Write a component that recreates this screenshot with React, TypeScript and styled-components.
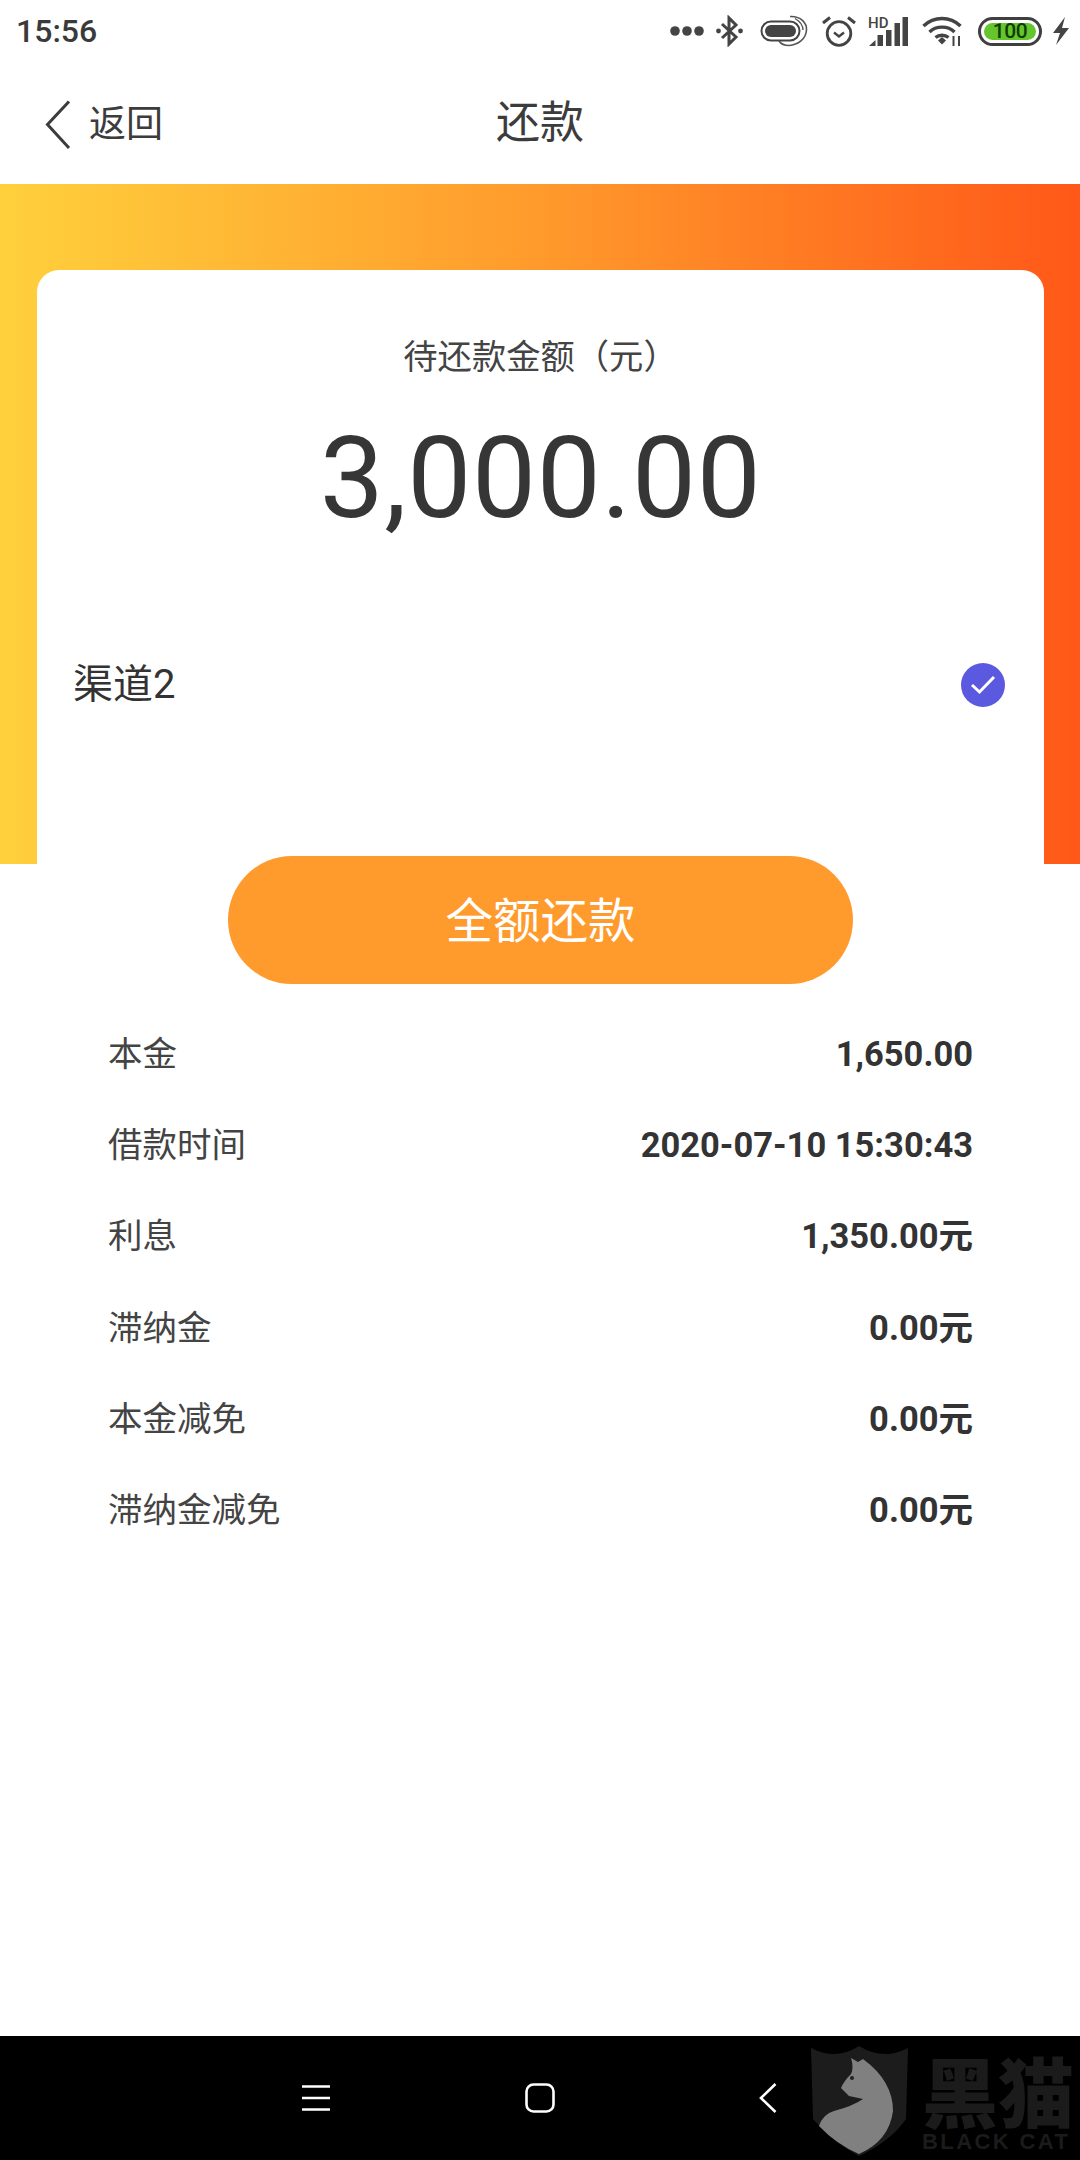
import React from "react";
import styled, { createGlobalStyle } from "styled-components";

const Global = createGlobalStyle`
  html, body { margin: 0; padding: 0; background: #fff; }
  #root { width: 1080px; height: 2160px; }
  * { box-sizing: border-box; }
`;

const FONT = `Roboto, "Noto Sans CJK SC", sans-serif`;

const Page = styled.div`
  position: relative;
  width: 1080px;
  height: 2160px;
  display: flex;
  flex-direction: column;
  overflow: hidden;
  background: #fff;
  color: #333;
  font-family: ${FONT};
`;

const StatusBar = styled.header`
  height: 60px;
  display: flex;
  align-items: center;
  justify-content: space-between;
  padding: 2px 10px 0 16px;
`;

const Clock = styled.span`
  font-size: 32px;
  font-weight: 500;
  color: #3a3a3a;
`;

const StatusIcons = styled.div`
  display: flex;
  align-items: center;
`;

const StatusIcon = styled.svg<{ $gap?: number }>`
  display: block;
  flex: none;
  margin-left: ${(p) => p.$gap ?? 0}px;
`;

const Battery = styled.div`
  width: 64px;
  height: 29px;
  margin-left: 14px;
  padding: 3px;
  border: 3px solid #3f3f3f;
  border-radius: 15px;
  display: flex;
`;

const BatteryFill = styled.div`
  flex: 1;
  border-radius: 10px;
  background: #64c52d;
  color: #123c06;
  font-size: 21px;
  line-height: 17px;
  font-weight: 500;
  text-align: center;
  letter-spacing: -0.5px;
`;

const NavBar = styled.nav`
  height: 124px;
  display: grid;
  grid-template-columns: 1fr auto 1fr;
  align-items: center;
  padding: 6px 45px 0;
`;

const BackLink = styled.div`
  display: flex;
  align-items: center;
  gap: 18px;
  font-size: 37px;
  line-height: 50px;
  color: #3c3c3c;
`;

const NavTitle = styled.h1`
  margin: 0 0 12px;
  font-size: 44px;
  font-weight: 400;
  color: #3c3c3c;
`;

const Hero = styled.section`
  height: 680px;
  padding: 86px 36px 0 37px;
  background: linear-gradient(90deg, #ffd03c 0%, #ff9a2c 50%, #ff5818 100%);
`;

const Card = styled.div`
  height: 594px;
  background: #fff;
  border-radius: 22px 22px 0 0;
  display: flex;
  flex-direction: column;
  align-items: center;
  padding-top: 65px;
`;

const CardLabel = styled.div`
  font-size: 34.3px;
  line-height: 44px;
  color: #444;
`;

const Amount = styled.div`
  font-size: 114px;
  line-height: 134px;
  margin-top: 32px;
  color: #363636;
  letter-spacing: 0.6px;
`;

const Channel = styled.div`
  align-self: stretch;
  margin-top: 116px;
  padding: 0 39px 0 36px;
  display: flex;
  align-items: center;
  justify-content: space-between;
  font-size: 40px;
  line-height: 48px;
  color: #333;
`;

const Check = styled.span`
  width: 44px;
  height: 44px;
  border-radius: 50%;
  background: #5b59e0;
  display: flex;
  align-items: center;
  justify-content: center;
`;

const PayButton = styled.button`
  align-self: center;
  width: 625px;
  height: 128px;
  margin-top: -8px;
  margin-left: 1px;
  border: none;
  border-radius: 64px;
  background: #ff9a2c;
  color: #fff;
  font-family: ${FONT};
  font-size: 47.5px;
  padding: 0 0 6px;
`;

const Details = styled.dl`
  margin: 25px 0 0;
  padding: 0 107px 0 108px;
`;

const Row = styled.div`
  height: 91.2px;
  display: flex;
  align-items: baseline;
  justify-content: space-between;
  font-size: 34.5px;
  line-height: 91.2px;
`;

const RowLabel = styled.dt`
  color: #444;
`;

const RowValue = styled.dd`
  margin: 0;
  font-weight: 700;
  color: #333;
`;

const BottomBar = styled.footer`
  margin-top: auto;
  height: 124px;
  background: #000;
  display: flex;
  align-items: center;
  padding: 0 0 0 301px;
`;

const NavKey = styled.svg<{ $gap?: number }>`
  display: block;
  margin-left: ${(p) => p.$gap ?? 0}px;
`;

const Watermark = styled.div`
  position: absolute;
  left: 811px;
  top: 2046px;
  height: 114px;
  display: flex;
  gap: 13px;
`;

const WatermarkText = styled.div`
  display: flex;
  flex-direction: column;
  padding-top: 3px;
  color: #1b1b1b;
  font-weight: 900;
  white-space: nowrap;
`;

const WatermarkCjk = styled.span`
  font-family: "Noto Sans CJK SC", sans-serif;
  font-size: 76px;
  line-height: 80px;
`;

const WatermarkLatin = styled.span`
  font-family: "Liberation Sans", sans-serif;
  font-size: 22px;
  line-height: 26px;
  letter-spacing: 2.4px;
`;

const rows: [string, string][] = [
  ["本金", "1,650.00"],
  ["借款时间", "2020-07-10 15:30:43"],
  ["利息", "1,350.00元"],
  ["滞纳金", "0.00元"],
  ["本金减免", "0.00元"],
  ["滞纳金减免", "0.00元"],
];

export default function App() {
  return (
    <Page>
      <Global />
      <StatusBar>
        <Clock>15:56</Clock>
        <StatusIcons>
          <StatusIcon width="34" height="10" viewBox="0 0 34 10">
            <circle cx="5" cy="5" r="4.8" fill="#444" />
            <circle cx="17" cy="5" r="4.8" fill="#444" />
            <circle cx="29" cy="5" r="4.8" fill="#444" />
          </StatusIcon>
          <StatusIcon $gap={12} width="27" height="32" viewBox="0 0 27 32" fill="none" stroke="#444" strokeWidth="3">
            <path d="M6 9 L20 22 L13 29 V3 L20 10 L6 23" />
            <circle cx="2.5" cy="16" r="2.4" fill="#444" stroke="none" />
            <circle cx="24.5" cy="16" r="2.4" fill="#444" stroke="none" />
          </StatusIcon>
          <StatusIcon $gap={17} width="48" height="32" viewBox="0 0 48 32" fill="none">
            <rect x="1.5" y="6.5" width="38" height="19" rx="9.5" stroke="#444" strokeWidth="2" />
            <rect x="5" y="10" width="31" height="12" rx="6" fill="#444" />
            <path d="M30 1.5 C42 1 47 9 46.5 15 C46 24 38 30 29 30.5 C24 30.5 21 29 19 26" stroke="#555" strokeWidth="1.6" />
            <path d="M35 3.5 C41 7 43 11 43 15" stroke="#555" strokeWidth="1.4" />
          </StatusIcon>
          <StatusIcon $gap={14} width="34" height="32" viewBox="0 0 34 32" fill="none" stroke="#444">
            <circle cx="17" cy="18.5" r="11.8" strokeWidth="2.8" />
            <path d="M12 17.5 L17 21.5 L22 17.5" strokeWidth="2.4" />
            <path d="M1 8 L8 2.5 M33 8 L26 2.5" strokeWidth="3" />
          </StatusIcon>
          <StatusIcon $gap={12} width="40" height="36" viewBox="0 -3 40 36" fill="#444">
            <text x="0" y="12" fontFamily="Roboto, sans-serif" fontSize="15" fontWeight="500" fill="#444">HD</text>
            <path d="M1 30 L7.5 24 V30 Z" />
            <rect x="9.5" y="19" width="5.5" height="11" />
            <rect x="18" y="14" width="5.5" height="16" />
            <rect x="26.5" y="7" width="5.5" height="23" />
            <rect x="34.5" y="1" width="5.5" height="29" />
          </StatusIcon>
          <StatusIcon $gap={14} width="42" height="30" viewBox="0 0 42 30" fill="none" stroke="#444" strokeWidth="3.4">
            <path d="M1.5 10 C12 0 28 0 38.5 10" />
            <path d="M7.5 16 C14 9.5 26 9.5 32.5 16" />
            <path d="M13.5 21.5 C17 18.5 23 18.5 26.5 21.5" />
            <path d="M16 24.5 L20 21 L24 24.5 L20 28.5 Z" fill="#444" stroke="none" />
            <path d="M31.5 20 V30 M37 20 V30" strokeWidth="2" />
          </StatusIcon>
          <Battery>
            <BatteryFill>100</BatteryFill>
          </Battery>
          <StatusIcon $gap={10} width="18" height="28" viewBox="0 0 18 28" fill="#444">
            <path d="M13 0 L1 16 H8 L4 28 L17 11 H10 Z" />
          </StatusIcon>
        </StatusIcons>
      </StatusBar>

      <NavBar>
        <BackLink>
          <svg width="26" height="50" viewBox="0 0 26 50" fill="none" stroke="#3c3c3c" strokeWidth="3">
            <path d="M24 1.5 L2.5 24.5 L24 48" />
          </svg>
          返回
        </BackLink>
        <NavTitle>还款</NavTitle>
      </NavBar>

      <Hero>
        <Card>
          <CardLabel>待还款金额（元）</CardLabel>
          <Amount>3,000.00</Amount>
          <Channel>
            渠道2
            <Check>
              <svg width="26" height="20" viewBox="0 0 26 20" fill="none" stroke="#fff" strokeWidth="3">
                <path d="M2 10 L9.5 17 L24 2" />
              </svg>
            </Check>
          </Channel>
        </Card>
      </Hero>

      <PayButton>全额还款</PayButton>

      <Details>
        {rows.map(([label, value]) => (
          <Row key={label}>
            <RowLabel>{label}</RowLabel>
            <RowValue>{value}</RowValue>
          </Row>
        ))}
      </Details>

      <BottomBar>
        <NavKey width="30" height="28" viewBox="0 0 30 28" stroke="#fff" strokeWidth="2.6" fill="none">
          <path d="M1 2.5 H29 M1 14 H29 M1 25.5 H29" />
        </NavKey>
        <NavKey $gap={194} width="30" height="30" viewBox="0 0 30 30" stroke="#fff" strokeWidth="2.6" fill="none">
          <rect x="1.5" y="1.5" width="27" height="27" rx="7" />
        </NavKey>
        <NavKey $gap={204} width="18" height="30" viewBox="0 0 18 30" stroke="#fff" strokeWidth="2.6" fill="none">
          <path d="M16.5 1 L2 15 L16.5 29" />
        </NavKey>
      </BottomBar>

      <Watermark>
        <svg width="98" height="112" viewBox="0 0 98 112">
          <path d="M0 2 Q25 15 48 0 Q72 15 97 2 L95 73 Q80 95 48 110 Q20 95 2 73 Z" fill="#1c1c1c" />
          <path
            d="M40 12 L47 16 L52 13 Q82 35 82 65 Q78 95 48 108 Q25 98 8 80 Q12 68 23 65 Q42 60 52 53 L38 50 L30 42 Q33 35 40 28 Q43 22 40 12Z"
            fill="#808080"
          />
          <circle cx="41" cy="32" r="2" fill="#222" />
        </svg>
        <WatermarkText>
          <WatermarkCjk>黑猫</WatermarkCjk>
          <WatermarkLatin>BLACK CAT</WatermarkLatin>
        </WatermarkText>
      </Watermark>
    </Page>
  );
}
